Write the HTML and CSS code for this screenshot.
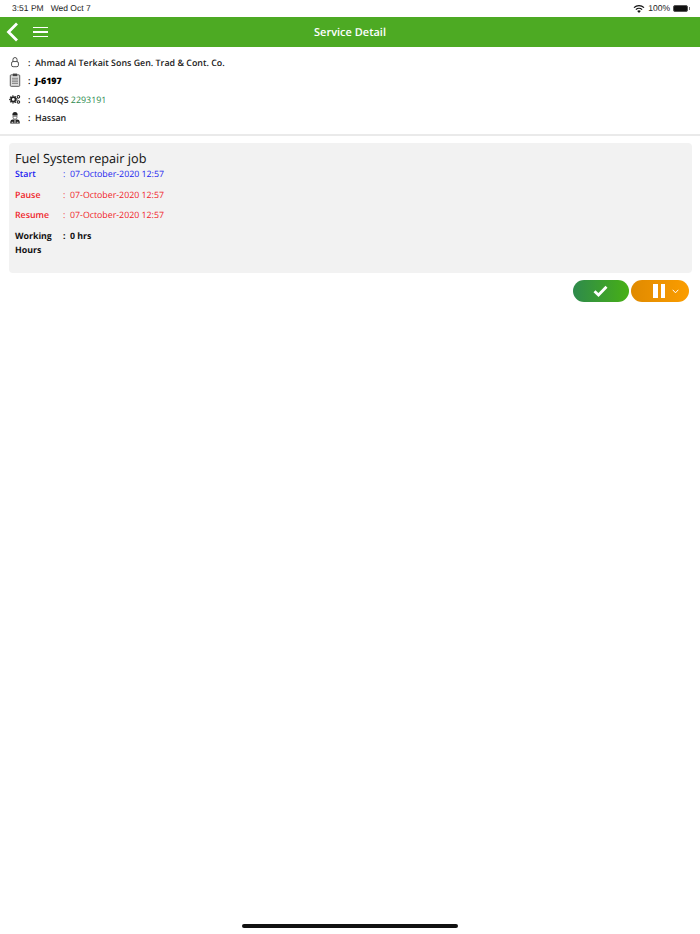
FILE: index.html
```html
<!DOCTYPE html>
<html lang="en">
<head>
    <meta charset="UTF-8">
    <meta name="viewport" content="width=device-width, initial-scale=1.0">
    <title>Service Detail</title>
    <link rel="stylesheet" href="styles.css">
</head>
<body>

<!-- Status bar -->
<div class="status-bar">
    <div class="status-time"><span>3:51 PM</span><span>Wed Oct 7</span></div>
    <div class="status-right">
        <svg class="wifi" width="12" height="9" viewBox="0 0 12 9">
            <path d="M6 9 L4.2 7 A2.6 2.6 0 0 1 7.8 7 Z" fill="#111"/>
            <path d="M2.9 5.6 A4.5 4.5 0 0 1 9.1 5.6" fill="none" stroke="#111" stroke-width="1.3"/>
            <path d="M1 3.6 A7.2 7.2 0 0 1 11 3.6" fill="none" stroke="#111" stroke-width="1.3"/>
        </svg>
        <span>100%</span>
        <div class="battery"><div class="battery-fill"></div></div>
        <div class="battery-cap"></div>
    </div>
</div>

<!-- Header -->
<div class="nav-bar">
    <div class="nav-left">
        <svg width="13" height="20" viewBox="0 0 13 20">
            <path d="M11 1.5 L2.5 10 L11 18.5" fill="none" stroke="#fff" stroke-width="2.8"/>
        </svg>
        <div class="hamburger"><span></span><span></span><span></span></div>
    </div>
    <div class="nav-title">Service Detail</div>
</div>

<!-- Customer info -->
<div class="info-block">
    <div class="info-row row-customer">
        <svg class="info-icon" width="14" height="14" viewBox="0 0 14 14">
            <path d="M4.6 6.6 V4.2 A2.4 2.4 0 0 1 9.4 4.2 V6.6" fill="none" stroke="#333" stroke-width="1"/>
            <rect x="3" y="6.5" width="8" height="6" rx="1.8" fill="none" stroke="#333" stroke-width="1"/>
        </svg>
        <span class="colon">:</span>
        <span>Ahmad Al Terkait Sons Gen. Trad &amp; Cont. Co.</span>
    </div>
    <div class="info-row row-job">
        <svg class="info-icon" width="14" height="16" viewBox="0 0 14 16">
            <rect x="1.5" y="2" width="11" height="13.4" rx="1" fill="#ddd" stroke="#444" stroke-width="1"/>
            <rect x="4.5" y="0.5" width="5" height="3" fill="#444"/>
            <path d="M3.5 6 H10.5 M3.5 8 H10.5 M3.5 10 H10.5 M3.5 12 H10.5" stroke="#777" stroke-width="1"/>
        </svg>
        <span class="colon">:</span>
        <b>J-6197</b>
    </div>
    <div class="info-row row-machine">
        <svg class="info-icon" width="14" height="14" viewBox="0 0 14 14">
            <circle cx="5" cy="7.5" r="2.6" fill="none" stroke="#222" stroke-width="2"/>
            <circle cx="5" cy="7.5" r="4.2" fill="none" stroke="#222" stroke-width="1.2" stroke-dasharray="1.5 1.5"/>
            <circle cx="11" cy="4.5" r="1.5" fill="none" stroke="#222" stroke-width="1.2"/>
            <circle cx="11" cy="10.5" r="1.5" fill="none" stroke="#222" stroke-width="1.2"/>
        </svg>
        <span class="colon">:</span>
        <span>G140QS <span class="serial">2293191</span></span>
    </div>
    <div class="info-row row-tech">
        <svg class="info-icon" width="14" height="14" viewBox="0 0 14 14">
            <path d="M4 3 A3 3 0 0 1 10 3 V4 H4 Z" fill="#222"/>
            <path d="M4.6 5 H9.4 V6 A2.4 2.4 0 0 1 4.6 6 Z" fill="none" stroke="#444" stroke-width="0.8"/>
            <path d="M1.5 13.5 V11.5 A3 3 0 0 1 4.5 8.8 H9.5 A3 3 0 0 1 12.5 11.5 V13.5 Z" fill="#222"/>
            <path d="M7 9 V13 M3 12 H5 M9 12 H11" stroke="#fff" stroke-width="1"/>
        </svg>
        <span class="colon">:</span>
        <span>Hassan</span>
    </div>
</div>

<!-- Job card -->
<div class="job-card">
    <div class="job-title">Fuel System repair job</div>
    <div class="job-grid">
        <div class="job-row start"><span class="job-label">Start</span><span class="job-colon">:</span><span>07-October-2020 12:57</span></div>
        <div class="job-row stop"><span class="job-label">Pause</span><span class="job-colon">:</span><span>07-October-2020 12:57</span></div>
        <div class="job-row stop"><span class="job-label">Resume</span><span class="job-colon">:</span><span>07-October-2020 12:57</span></div>
        <div class="job-row total"><span class="job-label">Working Hours</span><span class="job-colon">:</span><span>0 hrs</span></div>
    </div>
</div>

<!-- Actions -->
<div class="actions">
    <button type="button" class="pill-btn done-btn">
        <svg width="15" height="12" viewBox="0 0 15 12">
            <path d="M1.5 6.2 L5.5 10 L13.5 1.8" fill="none" stroke="#fff" stroke-width="2.8"/>
        </svg>
    </button>
    <button type="button" class="pill-btn pause-btn">
        <span class="pause-bars"><span></span><span></span></span>
        <svg width="7" height="5" viewBox="0 0 7 5">
            <path d="M0.7 0.8 L3.5 3.8 L6.3 0.8" fill="none" stroke="#fff" stroke-width="1"/>
        </svg>
    </button>
</div>

<div class="home-indicator"></div>

</body>
</html>
```

FILE: styles.css
```css
html, body {
    height: 100%;
}

body {
    margin: 0;
    background-color: #ffffff;
    font-family: "Open Sans", sans-serif;
    font-size: 9px;
    color: #111;
    display: flex;
    flex-direction: column;
    box-sizing: border-box;
    min-height: 934px;
    text-rendering: geometricPrecision;
}

.status-bar {
    height: 17px;
    display: flex;
    justify-content: space-between;
    align-items: center;
    padding: 0 10px 1px 12px;
    box-sizing: border-box;
    font-family: "Liberation Sans", Arial, sans-serif;
    font-size: 8.5px;
    color: #222;
}

.status-time {
    display: flex;
    gap: 7px;
}

.status-right {
    display: flex;
    align-items: center;
    gap: 3px;
}

.battery {
    width: 15px;
    height: 7px;
    border: 1px solid #555;
    border-radius: 2px;
    box-sizing: border-box;
    background-color: #111;
}

.battery-fill {
    height: 100%;
}

.battery-cap {
    width: 1px;
    height: 3px;
    margin-left: -2px;
    background-color: #777;
}

.nav-bar {
    height: 30px;
    background-color: #4daa23;
    display: flex;
    align-items: center;
    justify-content: center;
    position: relative;
}

.nav-left {
    position: absolute;
    left: 6px;
    top: 5px;
    display: flex;
    align-items: center;
    gap: 14px;
}

.hamburger {
    display: flex;
    flex-direction: column;
    gap: 3px;
}

.hamburger span {
    display: block;
    width: 15px;
    height: 1.6px;
    background-color: #fff;
}

.nav-title {
    color: #ffffff;
    font-size: 11px;
    font-weight: 600;
}

.info-block {
    height: 89px;
    padding: 6px 0 0 9px;
    box-sizing: border-box;
    border-bottom: 2px solid #eaeaea;
}

.info-row {
    display: flex;
    align-items: center;
    height: 18px;
    font-size: 8.9px;
    font-weight: 600;
    color: #222;
}

.row-job {
    color: #000;
}

.row-machine {
    height: 20px;
}

.row-tech {
    height: 17px;
}

.info-icon {
    width: 12px;
    flex: none;
}

.colon {
    margin-left: 7px;
    width: 7px;
    flex: none;
}

.serial {
    color: #2e8b4f;
    font-weight: 400;
}

.job-card {
    margin: 7px 8px 0 9px;
    height: 130px;
    padding: 7px 6px;
    box-sizing: border-box;
    background-color: #f2f2f2;
    border-radius: 4px;
}

.job-title {
    font-size: 12.7px;
    line-height: 17px;
    font-weight: 500;
    color: #111;
}

.job-row {
    display: grid;
    grid-template-columns: 48px 7px auto;
    line-height: 14px;
    font-size: 8.8px;
    margin-bottom: 6.5px;
}

.job-label {
    font-weight: 600;
}

.job-colon {
    text-align: left;
}

.start {
    color: #1c1cf0;
}

.stop {
    color: #f01c28;
}

.total {
    color: #111;
    font-weight: 700;
}

.total .job-label {
    font-weight: 700;
}

.actions {
    display: flex;
    justify-content: flex-end;
    gap: 2px;
    margin: 7px 11px 0 0;
}

.pill-btn {
    height: 22px;
    border: none;
    border-radius: 11px;
    padding: 0;
    display: flex;
    align-items: center;
    justify-content: center;
    cursor: pointer;
}

.done-btn {
    width: 56px;
    padding-right: 2px;
    background: linear-gradient(to right, #2e8a4c, #47b015);
}

.pause-btn {
    width: 58px;
    padding-left: 22px;
    justify-content: flex-start;
    gap: 7px;
    background: linear-gradient(to right, #e08a00, #fb9d00);
}

.pause-bars {
    display: flex;
    gap: 3px;
}

.pause-bars span {
    display: block;
    width: 4.5px;
    height: 14px;
    background-color: #fff;
}

.home-indicator {
    position: absolute;
    left: 242px;
    top: 924px;
    width: 216px;
    height: 4px;
    background-color: #111;
    border-radius: 2px;
}
```
